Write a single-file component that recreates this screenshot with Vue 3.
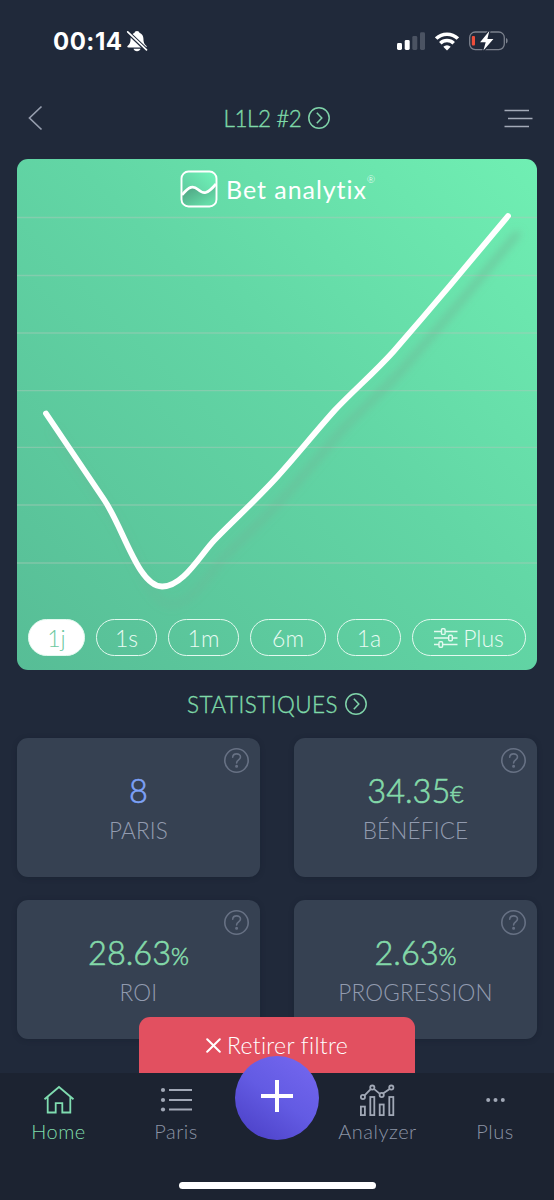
<template>
    <div class="screen">
        <header class="status-bar">
            <div class="clock">
                <span class="clock-time">00:14</span>
                <svg class="bell" width="22" height="22" viewBox="0 0 22 22">
                    <path d="M11 1c-1.400 0-2.300.8-2.400 1.700C6 3.700 4.600 6 4.600 8.500c0 4-.8 5.500-2.800 7.300-.9.800-.5 1.700.6 1.700h17.200c1.100 0 1.500-.9.600-1.700C18.200 14 17.400 12.500 17.400 8.500c0-2.500-1.400-4.800-4-5.800C13.300 1.800 12.400 1 11 1z" fill="#fff" />
                    <path d="M7.500 18.700h7c-.4 1.500-1.700 2.500-3.500 2.500s-3.100-1-3.500-2.500z" fill="#fff" />
                    <path d="M1 1.500l20 19" stroke="#20293a" stroke-width="3.800" />
                    <path d="M1.700 1.800l18.800 18" stroke="#fff" stroke-width="1.700" stroke-linecap="round" />
                </svg>
            </div>
            <div class="indicators">
                <svg width="28" height="19" viewBox="0 0 28 19">
                    <rect x="0" y="11" width="5" height="7" rx="1.400" fill="#fff" />
                    <rect x="7.700" y="8" width="5" height="10" rx="1.400" fill="#fff" />
                    <rect x="15.300" y="4" width="5" height="14" rx="1.400" fill="#4b5362" />
                    <rect x="23" y="0.300" width="5" height="17.700" rx="1.400" fill="#4b5362" />
                </svg>
                <svg width="24" height="19" viewBox="0 0 24 19">
                    <g fill="none" stroke="#fff" stroke-width="3.500">
                        <path d="M1.200 6.600a15.300 15.300 0 0 1 21.600 0" />
                        <path d="M5.300 11.200a9.500 9.500 0 0 1 13.400 0" />
                    </g>
                    <path d="M12 18.400l-3.700-3.700a5.200 5.200 0 0 1 7.400 0z" fill="#fff" />
                </svg>
                <svg width="39" height="20" viewBox="0 0 39 20">
                    <rect x="0.700" y="1" width="34.600" height="17.600" rx="5.500" fill="none" stroke="#7b818d" stroke-width="1.300" />
                    <path d="M37 7c2.200.8 2.200 4.600 0 5.400z" fill="#7b818d" />
                    <rect x="2.800" y="5" width="3.200" height="9.600" rx="1" fill="#ec4e3b" />
                    <path d="M20.300 0l-9.200 11.200h5.600l-2.300 8.400 10-11.500h-6z" fill="#fff" stroke="#20293a" stroke-width="2.400" paint-order="stroke" stroke-linejoin="round" />
                </svg>
            </div>
        </header>

        <div class="title-bar">
            <svg class="back" width="15" height="26" viewBox="0 0 15 26">
                <path d="M13.500 1.500L1.500 13l12 11.500" fill="none" stroke="#959dad" stroke-width="1.700" />
            </svg>
            <div class="link title">
                <span class="title-text">L1L2 #2</span>
                <svg class="chevron" viewBox="0 0 22 22">
                    <circle cx="11" cy="11" r="10.200" />
                    <path d="M8.800 5.800l5 5.200-5 5.200" />
                </svg>
            </div>
            <svg class="menu" width="29" height="19" viewBox="0 0 29 19">
                <path d="M.5 1.500h24.500M4 9.500h24.500M.5 17.500h24.500" fill="none" stroke="#a3aab8" stroke-width="1.600" />
            </svg>
        </div>

        <section class="chart-card">
            <svg class="chart" width="520" height="511" viewBox="17 159 520 511">
                <defs>
                    <filter id="lineShadow" x="-10%" y="-10%" width="125%" height="125%">
                        <feGaussianBlur stdDeviation="4" />
                    </filter>
                    <linearGradient id="shadowFade" gradientUnits="userSpaceOnUse" x1="60" y1="600" x2="500" y2="220">
                        <stop offset="0" stop-color="#7fa08f" stop-opacity="0.060" />
                        <stop offset="0.300" stop-color="#7fa08f" stop-opacity="0.300" />
                        <stop offset="1" stop-color="#6fa68c" stop-opacity="0.550" />
                    </linearGradient>
                </defs>
                <line v-for="y in gridLines" :key="y" x1="17" x2="537" :y1="y" :y2="y" class="grid-line" />
                <path :d="curve" transform="translate(9 18)" class="curve" stroke="url(#shadowFade)" filter="url(#lineShadow)" />
                <path :d="curve" class="curve" stroke="#fff" />
            </svg>

            <div class="brand">
                <svg width="38" height="38" viewBox="0 0 38 38">
                    <defs>
                        <linearGradient id="logoTop" x1="0" y1="1" x2="1" y2="0">
                            <stop offset="0" stop-color="#5cbf98" />
                            <stop offset="1" stop-color="#70f5ba" />
                        </linearGradient>
                        <linearGradient id="logoBottom" x1="0" y1="0.300" x2="0.600" y2="1">
                            <stop offset="0" stop-color="#4fa584" />
                            <stop offset="1" stop-color="#66dca8" />
                        </linearGradient>
                    </defs>
                    <rect x="1.500" y="1.500" width="35" height="35" rx="7" fill="url(#logoTop)" />
                    <path d="M1.500 25c7-8 11-10 16-5 5 4 8 4 19-6v15.500q0 7-7 7h-21q-7 0-7-7z" fill="url(#logoBottom)" />
                    <rect x="1.500" y="1.500" width="35" height="35" rx="7" fill="none" stroke="#fff" stroke-width="1.900" />
                    <path d="M2 25c7-8.500 11-10 16-5.500 5.500 4.800 9 5 18-5.500" fill="none" stroke="#fff" stroke-width="2.700" />
                </svg>
                <span class="brand-name">Bet analytix</span>
                <span class="brand-mark">®</span>
            </div>

            <div class="periods">
                <button v-for="p in periods" :key="p.label" class="pill" :class="[p.size, { active: p.label === current }]"
                    @click="current = p.label">{{ p.label }}</button>
                <button class="pill more">
                    <svg width="24" height="20" viewBox="0 0 24 20">
                        <g fill="none" stroke="#e3f9ef" stroke-width="1.400">
                            <path d="M0 3.500h7.500M11.500 3.500h12M0 10h14.500M18.500 10h5M0 16.500h5M9 16.500h14.500" />
                            <rect x="7.500" y="0.800" width="3.600" height="5.600" rx="1" />
                            <rect x="14.700" y="7.200" width="3.600" height="5.600" rx="1" />
                            <rect x="5" y="13.700" width="3.600" height="5.600" rx="1" />
                        </g>
                    </svg>
                    <span>Plus</span>
                </button>
            </div>
        </section>

        <div class="link section-title">
            <span class="section-text">STATISTIQUES</span>
            <svg class="chevron" viewBox="0 0 22 22">
                <circle cx="11" cy="11" r="10.200" />
                <path d="M8.800 5.800l5 5.200-5 5.200" />
            </svg>
        </div>

        <section class="stats">
            <article v-for="s in stats" :key="s.label" class="stat-card">
                <svg class="help" width="25" height="25" viewBox="0 0 25 25">
                    <circle cx="12.500" cy="12.500" r="11.700" />
                    <path d="M8.700 9.300c.1-4.500 7.800-4.500 7.800-.3 0 2.900-3.900 2.700-3.900 5.900" />
                    <circle cx="12.600" cy="18.300" r="0.700" />
                </svg>
                <div class="value" :class="s.tone">{{ s.value }}<small>{{ s.unit }}</small></div>
                <div class="label">{{ s.label }}</div>
            </article>
        </section>

        <button class="remove-filter">
            <svg width="15" height="15" viewBox="0 0 15 15">
                <path d="M1.200 1.200l12.600 12.600M13.800 1.200L1.200 13.800" stroke="#fff" stroke-width="2" stroke-linecap="round" />
            </svg>
            <span>Retirer filtre</span>
        </button>

        <nav class="tab-bar">
            <a class="tab home">
                <svg width="32" height="32" viewBox="0 0 32 32">
                    <path d="M1.500 15.300L16 3l14.500 12.300M4.700 13v15.500h8v-9.300h6.600v9.300h8V13" />
                </svg>
                <span>Home</span>
            </a>
            <a class="tab paris">
                <svg width="32" height="32" viewBox="0 0 32 32">
                    <path d="M9 6h23M9 16h23M9 25.500h23" />
                    <g class="dots">
                        <circle cx="3" cy="6" r="2.100" />
                        <circle cx="3" cy="16" r="2.100" />
                        <circle cx="3" cy="25.500" r="2.100" />
                    </g>
                </svg>
                <span>Paris</span>
            </a>
            <button class="add">
                <svg width="34" height="34" viewBox="0 0 34 34">
                    <path d="M17 1v32M1 17h32" stroke="#fff" stroke-width="4" />
                </svg>
            </button>
            <a class="tab analyzer">
                <svg width="36" height="32" viewBox="0 0 36 32">
                    <path d="M4.400 11.600l6.300-6.500M13.900 4.900l5.700 4.700M23 9.600l6.600-4.700" />
                    <circle cx="2.900" cy="13" r="2.100" />
                    <circle cx="12.300" cy="3.600" r="2.100" />
                    <circle cx="21.700" cy="11" r="2.100" />
                    <circle cx="31.300" cy="3.600" r="2.100" />
                    <rect x="0.900" y="22.600" width="4" height="8.500" />
                    <rect x="10.300" y="13" width="4" height="18.100" />
                    <rect x="19.700" y="20.500" width="4" height="10.600" />
                    <rect x="29.300" y="13" width="4" height="18.100" />
                </svg>
                <span>Analyzer</span>
            </a>
            <a class="tab plus">
                <svg width="32" height="32" viewBox="0 0 32 32">
                    <g class="dots">
                        <circle cx="9.200" cy="16" r="2" />
                        <circle cx="16.500" cy="16" r="2" />
                        <circle cx="23.800" cy="16" r="2" />
                    </g>
                </svg>
                <span>Plus</span>
            </a>
            <div class="home-indicator"></div>
        </nav>
    </div>
</template>

<script setup>
import { ref } from 'vue'

const current = ref('1j')

const periods = [
    { label: '1j', size: 'day' },
    { label: '1s', size: 'week' },
    { label: '1m', size: 'month' },
    { label: '6m', size: 'half' },
    { label: '1a', size: 'year' }
]

const stats = [
    { label: 'PARIS', value: '8', unit: '', tone: 'blue' },
    { label: 'BÉNÉFICE', value: '34.35', unit: '€', tone: 'green' },
    { label: 'ROI', value: '28.63', unit: '%', tone: 'green' },
    { label: 'PROGRESSION', value: '2.63', unit: '%', tone: 'green' }
]

const gridLines = [217.5, 275.5, 333, 390.7, 447.4, 505, 563]

const curve = 'M46 413.500L104 499.500C124 529 138 586 162 586.500C183 587 200 555 215 539.500C236 518 257 499 277 477C297 455 316 431 335 410C354 390 374 373 393 352C413 329 431 308 450 285.500L508 216'
</script>

<style>
body {
    margin: 0;
    background: #20293a;
}
</style>

<style scoped>
.screen {
    position: relative;
    width: 554px;
    height: 1200px;
    overflow: hidden;
    box-sizing: border-box;
    display: flex;
    flex-direction: column;
    background: #20293a;
    font-family: Lato, "Open Sans", sans-serif;
    font-weight: 300;
    font-variant-ligatures: none;
}

button {
    font: inherit;
    font-variant-ligatures: none;
    margin: 0;
    padding: 0;
    border: none;
    box-sizing: border-box;
}

svg {
    display: block;
    flex-shrink: 0;
}

.status-bar {
    height: 82px;
    box-sizing: border-box;
    padding: 0 46px 0 53px;
    display: flex;
    justify-content: space-between;
    align-items: center;
}

.clock {
    display: flex;
    align-items: center;
    gap: 4px;
}

.clock-time {
    font-family: Inter, sans-serif;
    font-size: 24px;
    font-weight: 700;
    color: #fff;
    letter-spacing: 0.5px;
}

.indicators {
    display: flex;
    align-items: center;
    gap: 10px;
}

.title-bar {
    height: 72px;
    padding: 0 21px 0 28px;
    display: flex;
    align-items: center;
    justify-content: space-between;
}

.link {
    display: flex;
    align-items: center;
    justify-content: center;
    gap: 7px;
    color: #7ed9a8;
    font-size: 22.5px;
    -webkit-text-stroke: 0.35px currentColor;
}

.title {
    margin-left: 7px;
    letter-spacing: -0.45px;
}

.chevron {
    width: 22px;
    height: 22px;
    fill: none;
    stroke: #7fd3a9;
    stroke-width: 1.5;
}

.chart-card {
    position: relative;
    margin: 5px 17px 0;
    height: 511px;
    border-radius: 11px;
    overflow: hidden;
    flex-shrink: 0;
    background: linear-gradient(45deg, #57bd96 0%, #62d6a5 55%, #70efb3 100%);
}

.chart {
    position: absolute;
    inset: 0;
}

.grid-line {
    stroke: rgba(172, 200, 187, 0.48);
    stroke-width: 1.3;
}

.curve {
    fill: none;
    stroke-width: 5.8;
    stroke-linecap: round;
    stroke-linejoin: round;
}

.brand {
    position: relative;
    display: flex;
    align-items: center;
    padding: 11px 0 0 163px;
    color: #fff;
}

.brand-name {
    margin-left: 8px;
    font-size: 25px;
    font-weight: 400;
    letter-spacing: 0.95px;
}

.brand-mark {
    font-size: 10px;
    align-self: flex-start;
    margin-top: 3px;
}

.periods {
    position: absolute;
    left: 11px;
    right: 11px;
    bottom: 14px;
    display: flex;
    justify-content: space-between;
}

.pill {
    height: 37px;
    border: 1.7px solid #e3f9ef;
    border-radius: 19px;
    background: transparent;
    color: #e9fbf3;
    font-size: 23px;
    line-height: 34px;
}

.pill.active {
    background: #fff;
    color: #6dc8a0;
}

.day {
    width: 57px;
}

.week {
    width: 61px;
}

.month {
    width: 71px;
}

.half {
    width: 76px;
}

.year {
    width: 64px;
}

.more {
    width: 114px;
    display: flex;
    align-items: center;
    justify-content: center;
    gap: 5px;
}

.section-title {
    height: 68px;
    flex-shrink: 0;
}

.section-text {
    letter-spacing: 0.45px;
}

.stats {
    display: grid;
    grid-template-columns: 243px 243px;
    grid-auto-rows: 139px;
    column-gap: 34px;
    row-gap: 23px;
    padding: 0 17px;
}

.stat-card {
    position: relative;
    border-radius: 11px;
    background: #364152;
    text-align: center;
    box-shadow: 0 1px 5px rgba(20, 28, 42, 0.35);
}

.help {
    position: absolute;
    top: 10px;
    right: 11px;
    fill: none;
    stroke: #677184;
    stroke-width: 1.6;
    stroke-linecap: round;
}

.value {
    padding-top: 33px;
    height: 40px;
    line-height: 40px;
    font-size: 32.5px;
    -webkit-text-stroke: 0.6px currentColor;
}

.value small {
    font-size: 23px;
}

.blue {
    color: #7da2f7;
}

.green {
    color: #83d9a9;
}

.label {
    margin-top: 5px;
    font-size: 22.5px;
    line-height: 30px;
    color: #929baf;
    letter-spacing: 0.2px;
}

.remove-filter {
    position: absolute;
    left: 139px;
    top: 1017px;
    width: 276px;
    height: 56px;
    border-radius: 11px 11px 0 0;
    background: #e25060;
    color: #fff;
    font-size: 23px;
    letter-spacing: 0.3px;
    display: flex;
    align-items: center;
    justify-content: center;
    gap: 6px;
}

.tab-bar {
    position: absolute;
    left: 0;
    right: 0;
    bottom: 0;
    height: 127px;
    background: #1c2331;
    display: grid;
    grid-template-columns: 117px 118px 84px 117px 118px;
    align-items: start;
}

.tab {
    padding-top: 11px;
    display: flex;
    flex-direction: column;
    align-items: center;
    color: #8b93a5;
    font-size: 20px;
}

.tab svg {
    fill: none;
    stroke: #a1a8b6;
    stroke-width: 1.8;
}

.tab span {
    line-height: 30px;
    letter-spacing: 0.5px;
}

.tab .dots {
    fill: #a1a8b6;
    stroke: none;
}

.home {
    color: #7fdcab;
}

.home svg {
    stroke: #7fdcb0;
}

.add {
    width: 84px;
    height: 84px;
    margin-top: -17px;
    border-radius: 50%;
    display: flex;
    align-items: center;
    justify-content: center;
    padding-bottom: 5px;
    background: linear-gradient(35deg, #4b40c6 5%, #635be3 50%, #7668f0 100%);
}

.home-indicator {
    position: absolute;
    left: 179px;
    bottom: 11px;
    width: 197px;
    height: 7px;
    border-radius: 4px;
    background: #fff;
}
</style>
